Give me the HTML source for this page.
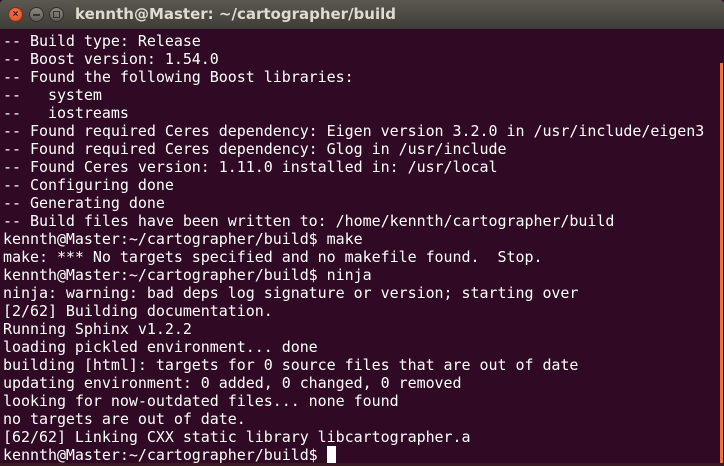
<!DOCTYPE html>
<html><head><meta charset="utf-8"><style>
html,body{margin:0;padding:0;width:724px;height:466px;overflow:hidden;background:#300a24;}
.title{position:absolute;left:0;top:0;width:724px;height:29px;background:linear-gradient(#5a5850,#3e3d38);border-radius:4px 4px 0 0;}
.title .t{position:absolute;left:75px;top:5px;font:bold 15px "DejaVu Sans","Liberation Sans",sans-serif;color:#dfdbd2;}
.btn{position:absolute;top:7px;width:15px;height:15px;border-radius:50%;box-sizing:border-box;}
.b1{left:8px;background:radial-gradient(circle at 50% 40%,#f57a54,#d8471e);border:1px solid #7a2f18;color:#3a1208;font:bold 10px sans-serif;text-align:center;line-height:13px;}
.b2{left:29px;background:linear-gradient(#8a8880,#5e5c55);border:1px solid #2f2e2a;}
.b3{left:49px;background:linear-gradient(#8a8880,#5e5c55);border:1px solid #2f2e2a;}
.b2:after{content:"";position:absolute;left:3px;top:6px;width:7px;height:2px;background:#333;}
.b3:after{content:"";position:absolute;left:3px;top:3px;width:5px;height:5px;border:1px solid #333;}
pre{position:absolute;left:3px;top:32px;margin:0;font:15px/18px "DejaVu Sans Mono","Liberation Mono",monospace;letter-spacing:-0.04px;color:#ffffff;}
.cur{display:inline-block;width:9px;height:17px;background:#fff;vertical-align:top;}
.sb{position:absolute;left:720px;top:63px;width:3px;height:400px;background:#f0703c;}
.bot{position:absolute;left:0;top:463px;width:724px;height:3px;background:#3b1a24;}
</style></head><body>
<div class="title"><div class="btn b1">×</div><div class="btn b2"></div><div class="btn b3"></div><div class="t">kennth@Master: ~/cartographer/build</div></div>
<pre>-- Build type: Release
-- Boost version: 1.54.0
-- Found the following Boost libraries:
--   system
--   iostreams
-- Found required Ceres dependency: Eigen version 3.2.0 in /usr/include/eigen3
-- Found required Ceres dependency: Glog in /usr/include
-- Found Ceres version: 1.11.0 installed in: /usr/local
-- Configuring done
-- Generating done
-- Build files have been written to: /home/kennth/cartographer/build
kennth@Master:~/cartographer/build$ make
make: *** No targets specified and no makefile found.  Stop.
kennth@Master:~/cartographer/build$ ninja
ninja: warning: bad deps log signature or version; starting over
[2/62] Building documentation.
Running Sphinx v1.2.2
loading pickled environment... done
building [html]: targets for 0 source files that are out of date
updating environment: 0 added, 0 changed, 0 removed
looking for now-outdated files... none found
no targets are out of date.
[62/62] Linking CXX static library libcartographer.a
kennth@Master:~/cartographer/build$ <span class="cur"></span></pre>
<div class="sb"></div><div class="bot"></div>
</body></html>
